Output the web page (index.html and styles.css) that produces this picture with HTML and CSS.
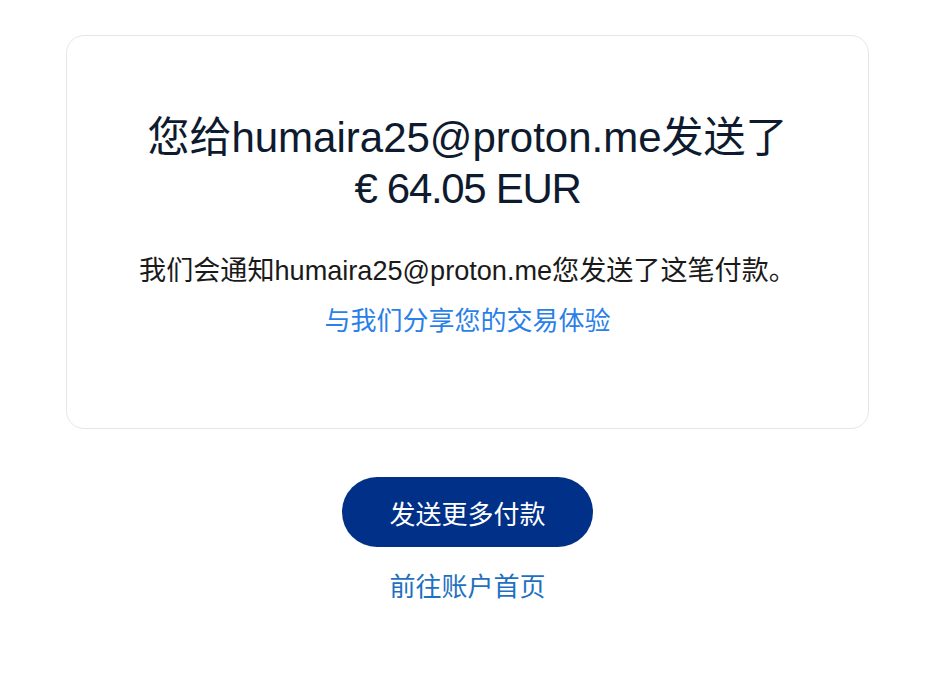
FILE: index.html
```html
<!DOCTYPE html>
<html lang="zh-CN">
<head>
<meta charset="utf-8">
<title>付款已发送</title>
<link rel="stylesheet" href="styles.css">
</head>
<body>
<main class="page">
  <section class="card">
    <h1 class="title">您给humaira25@proton.me发送了<br><span class="amount">€ 64.05 EUR</span></h1>
    <p class="note">我们会通知humaira25@proton.me您发送了这笔付款。</p>
    <a class="share" href="#">与我们分享您的交易体验</a>
  </section>
  <div class="actions">
    <a class="btn" href="#">发送更多付款</a>
    <a class="home" href="#">前往账户首页</a>
  </div>
</main>
</body>
</html>
```

FILE: styles.css
```css
* { box-sizing: border-box; }
html, body {
  margin: 0;
  padding: 0;
  background: #ffffff;
}
body {
  font-family: "Liberation Sans", "Noto Sans CJK SC", sans-serif;
  color: #1a1a1a;
}
.page {
  display: flex;
  flex-direction: column;
  align-items: center;
  padding-top: 35px;
  padding-left: 2px;
}
.card {
  width: 803px;
  border: 1px solid #e6e6e6;
  border-radius: 18px;
  padding: 76px 40px 87px;
  display: flex;
  flex-direction: column;
  align-items: center;
  text-align: center;
}
.title {
  margin: 0;
  font-size: 42px;
  line-height: 51px;
  font-weight: 400;
  color: #0e1a2e;
}
.amount {
  letter-spacing: -1.3px;
}
.note {
  margin: 37px 0 0;
  font-size: 27.1px;
  line-height: 39px;
  color: #1a1a1a;
}
.share {
  margin-top: 12px;
  font-size: 26px;
  line-height: 39px;
  color: #2a7fe8;
  text-decoration: none;
}
.actions {
  margin-top: 48px;
  display: flex;
  flex-direction: column;
  align-items: center;
  gap: 21px;
}
.btn {
  display: flex;
  align-items: center;
  justify-content: center;
  width: 251px;
  height: 70px;
  border-radius: 35px;
  background: #003087;
  color: #ffffff;
  font-size: 26px;
  text-decoration: none;
}
.home {
  font-size: 26px;
  line-height: 39px;
  color: #1f70c1;
  text-decoration: none;
}
```
